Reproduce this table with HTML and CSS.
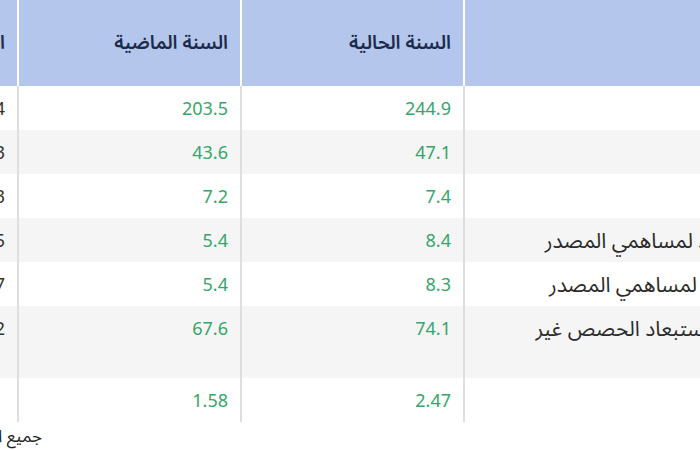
FILE: index.html
```html
<!DOCTYPE html>
<html lang="ar">

<head>
  <meta charset="utf-8">
  <title>النتائج المالية</title>

  <link rel="stylesheet" href="styles.css">
</head>

<body>

  <div class="page">
    <table class="results">
      <colgroup>
        <col class="col-label">
        <col class="col-num">
        <col class="col-num">
        <col class="col-change">
      </colgroup>
      <thead>
        <tr>
          <th>البند</th>
          <th>السنة الحالية</th>
          <th>السنة الماضية</th>
          <th>التغير</th>
        </tr>
      </thead>
      <tbody>
        <tr>
          <td class="label">الإيرادات</td>
          <td class="num">244.9</td>
          <td class="num">203.5</td>
          <td class="change">20.34</td>
        </tr>
        <tr class="alt">
          <td class="label">إجمالي الربح</td>
          <td class="num">47.1</td>
          <td class="num">43.6</td>
          <td class="change">8.03</td>
        </tr>
        <tr>
          <td class="label">الربح التشغيلي</td>
          <td class="num">7.4</td>
          <td class="num">7.2</td>
          <td class="change">2.83</td>
        </tr>
        <tr class="alt">
          <td class="label">صافي الربح قبل الزكاة العائد لمساهمي المصدر</td>
          <td class="num">8.4</td>
          <td class="num">5.4</td>
          <td class="change">55.55</td>
        </tr>
        <tr>
          <td class="label">صافي الربح بعد الزكاة العائد لمساهمي المصدر</td>
          <td class="num">8.3</td>
          <td class="num">5.4</td>
          <td class="change">53.7</td>
        </tr>
        <tr class="alt">
          <td class="label">إجمالي الدخل الشامل بعد استبعاد الحصص غير المسيطرة</td>
          <td class="num">74.1</td>
          <td class="num">67.6</td>
          <td class="change">9.62</td>
        </tr>
        <tr>
          <td class="label">ربحية السهم (ريال)</td>
          <td class="num">2.47</td>
          <td class="num">1.58</td>
          <td class="change"></td>
        </tr>
      </tbody>
    </table>

    <p class="note">جميع الأرقام بالمليون ريال</p>
  </div>

</body>

</html>
```

FILE: styles.css
```css
body {
  margin: 0;
  width: 700px;
  height: 450px;
  overflow: hidden;
  background-color: white;
  font-family: "Noto Sans", "Noto Sans Arabic", "DejaVu Sans", sans-serif;
  color: #333;
}

.page {
  margin-left: -210px;
  width: 1200px;
}

.results {
  direction: rtl;
  border-collapse: collapse;
  table-layout: fixed;
  width: 1147px;
}

.col-change {
  width: 227px;
}

.col-num {
  width: 223px;
}

.col-label {
  width: 474px;
}

.results th {
  height: 86px;
  padding: 0 12px;
  background-color: #b4c6ec;
  border-left: 2px solid white;
  border-right: 2px solid white;
  color: #1c2b4b;
  font-size: 19px;
  font-weight: 600;
  text-align: right;
  vertical-align: middle;
}

.results td {
  padding: 8px 12px;
  line-height: 28px;
  border-left: 2px solid #dedede;
  border-right: 2px solid #dedede;
  font-size: 18px;
  text-align: right;
  vertical-align: top;
}

.results .alt td {
  background-color: #f5f5f5;
}

.results .label {
  font-size: 21px;
  color: #2b2b2b;
}

.results .num {
  color: #36a66b;
}

.results .change {
  color: #333;
}

.note {
  direction: rtl;
  width: 252px;
  margin: 2px 0 0;
  font-size: 17px;
  line-height: 24px;
  color: #222;
}
```
